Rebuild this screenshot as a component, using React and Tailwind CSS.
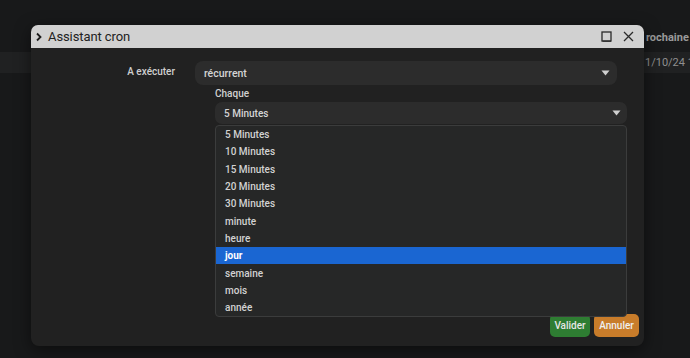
import React from "react";

const items = ["5 Minutes","10 Minutes","15 Minutes","20 Minutes","30 Minutes","minute","heure","jour","semaine","mois","année"];

function Caret() {
  return (
    <svg width="9" height="6" viewBox="0 0 9 6" className="shrink-0">
      <path d="M0.5 0.5 L8.5 0.5 L4.5 5.5 Z" fill="#cfcfcf" />
    </svg>
  );
}

export default function App() {
  return (
    <div className="relative w-[690px] h-[358px] overflow-hidden bg-[#18191a]" style={{ fontFamily: "Roboto, 'Noto Sans', sans-serif" }}>
      {/* background page */}
      <div className="flex flex-col pt-[28px]">
        <div className="h-[20px] flex justify-end">
          <span className="text-[11px] font-bold text-[#9a9a9a] leading-[20px] w-[44px] whitespace-nowrap">rochaine</span>
        </div>
        <div className="mt-[4px] h-[21px] bg-[#202122] flex justify-end">
          <span className="text-[11px] text-[#8f8f8f] leading-[21px] w-[45px] whitespace-nowrap">1/10/24 1</span>
        </div>
      </div>

      {/* dialog */}
      <div className="absolute left-[31px] top-[25px] w-[613px] h-[321px] rounded-t-[7px] rounded-b-[8px] bg-[#212121] shadow-[0_4px_16px_rgba(0,0,0,0.5)] flex flex-col">
        <div className="h-[23px] bg-[#d1d1d1] rounded-t-[7px] flex items-center pl-[4px] pr-[10px]">
          <svg width="8" height="10" viewBox="0 0 8 10" className="mr-[5px]">
            <path d="M2 1.5 L5.5 5 L2 8.5" fill="none" stroke="#1c1c1c" strokeWidth="1.8" />
          </svg>
          <span className="text-[13px] tracking-[-0.1px] text-[#222] leading-none">Assistant cron</span>
          <div className="ml-auto flex items-center gap-[11px]">
            <svg width="11" height="11" viewBox="0 0 11 11">
              <rect x="1" y="1" width="9" height="9" fill="none" stroke="#2a2a2a" strokeWidth="1.3" />
              <path d="M1.5 10.2 L10 10.2" stroke="#2a2a2a" strokeWidth="1.2" />
            </svg>
            <svg width="11" height="11" viewBox="0 0 11 11">
              <path d="M1 1 L10 10 M10 1 L1 10" stroke="#2a2a2a" strokeWidth="1.3" />
            </svg>
          </div>
        </div>
        <div className="flex-1 flex flex-col relative">
          <div className="flex mt-[13px]">
            <div className="w-[144px] text-right text-[10px] font-medium text-[#cfcfcf] leading-[14px] pt-[4px]">A exécuter</div>
            <div className="ml-[20px] w-[422px] h-[24px] rounded-[8px] bg-[#2c2c2c] flex items-center pl-[9px] pr-[7px]">
              <span className="text-[10.5px] font-medium text-[#d4d4d4] flex-1 pt-[2px]">récurrent</span>
              <Caret />
            </div>
          </div>
          <div className="ml-[184px] mt-[2px] text-[10px] font-medium text-[#d0d0d0] leading-[14px]">Chaque</div>
          <div className="ml-[184px] mt-[1px] w-[412px] h-[22px] rounded-[7px] bg-[#2c2c2c] flex items-center pl-[9px] pr-[6px]">
            <span className="text-[10px] font-medium text-[#d4d4d4] flex-1">5 Minutes</span>
            <Caret />
          </div>
          <div className="ml-[184px] mt-[1px] w-[412px] bg-[#262727] border border-[#3b3c3c] rounded-[4px] flex flex-col relative z-10">
            {items.map((it) => (
              <div
                key={it}
                className={
                  it === "jour"
                    ? "h-[17.3px] flex items-center pl-[9px] text-[10px] bg-[#1a66d2] text-white font-bold"
                    : "h-[17.3px] flex items-center pl-[9px] text-[10px] font-medium text-[#d2d2d2]"
                }
              >
                {it}
              </div>
            ))}
          </div>
          <div className="flex justify-end gap-[4px] pr-[5px] mt-[-3px]">
            <button className="w-[40px] h-[23px] rounded-[5px] bg-[#2e7d32] text-[10px] font-medium text-[#e6e6e6]">Valider</button>
            <button className="w-[45px] h-[23px] rounded-[5px] bg-[#c87c2a] text-[10px] font-medium text-[#efefef]">Annuler</button>
          </div>
        </div>
      </div>
    </div>
  );
}
